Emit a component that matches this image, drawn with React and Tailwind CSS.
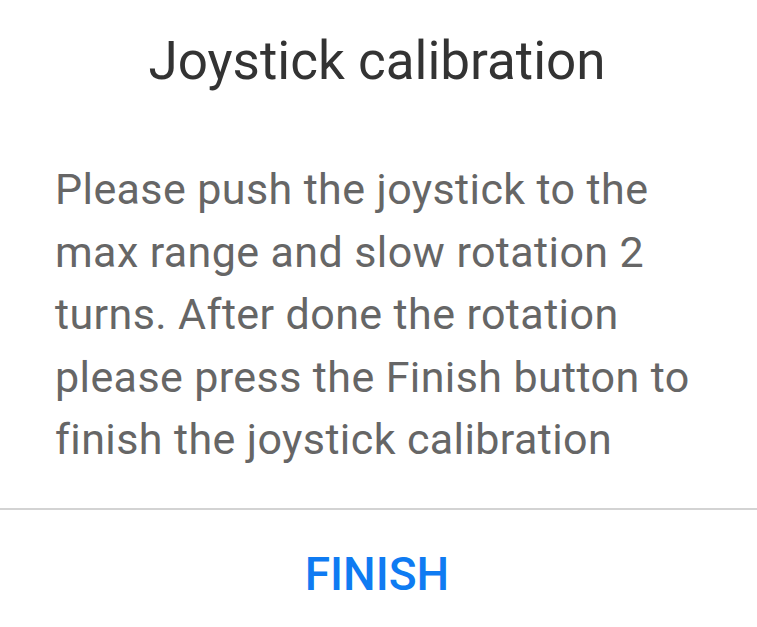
export default function App() {
  return (
    <div className="w-[757px] h-[627px] bg-white flex flex-col font-['Roboto',sans-serif] overflow-hidden">
      <h1 className="pt-[29px] pr-[3px] text-center text-[53px] leading-[64px] text-[#333333]">
        Joystick calibration
      </h1>
      <p className="mt-[65px] pl-[55px] text-[43px] leading-[62.5px] tracking-[0.4px] text-[#666666] whitespace-nowrap">
        Please push the joystick to the
        <br />
        max range and slow rotation 2
        <br />
        turns. After done the rotation
        <br />
        please press the Finish button to
        <br />
        finish the joystick calibration
      </p>
      <div className="mt-[37px] h-[2px] bg-[#d3d3d3]"></div>
      <div className="mt-[37px] pr-[3px] flex justify-center">
        <button className="font-medium text-[46px] leading-[54px] text-[#0f7bf2]">
          FINISH
        </button>
      </div>
    </div>
  );
}
